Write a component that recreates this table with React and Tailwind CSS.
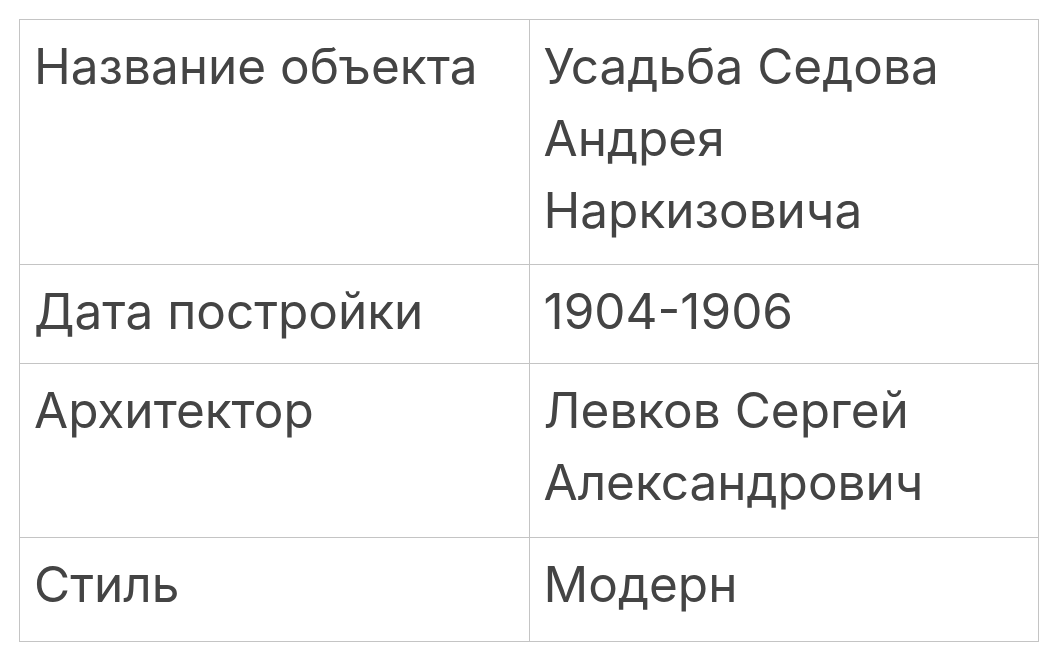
import React from "react";

const rows = [
  { label: "Название объекта", value: "Усадьба Седова Андрея Наркизовича", h: "h-[245px]" },
  { label: "Дата постройки", value: "1904-1906", h: "h-[99px]" },
  { label: "Архитектор", value: "Левков Сергей Александрович", h: "h-[174px]" },
  { label: "Стиль", value: "Модерн", h: "h-[104px]" },
];

const App = () => {
  return (
    <div className="w-[1060px] h-[672px] bg-white pt-[19px] pl-[19px]" style={{ fontFamily: "Inter, 'Noto Sans', sans-serif" }}>
      <table className="w-[1020px] border-collapse table-fixed text-[#444444] text-[49.5px] leading-[72px]">
        <tbody>
          {rows.map((row, idx) => (
            <tr key={idx} className={row.h}>
              <td className="w-1/2 align-top border border-[#c4c4c4] px-[14px] pt-[10px]">{row.label}</td>
              <td className="w-1/2 align-top border border-[#c4c4c4] px-[14px] pt-[10px]">{row.value}</td>
            </tr>
          ))}
        </tbody>
      </table>
    </div>
  );
};

export default App;
